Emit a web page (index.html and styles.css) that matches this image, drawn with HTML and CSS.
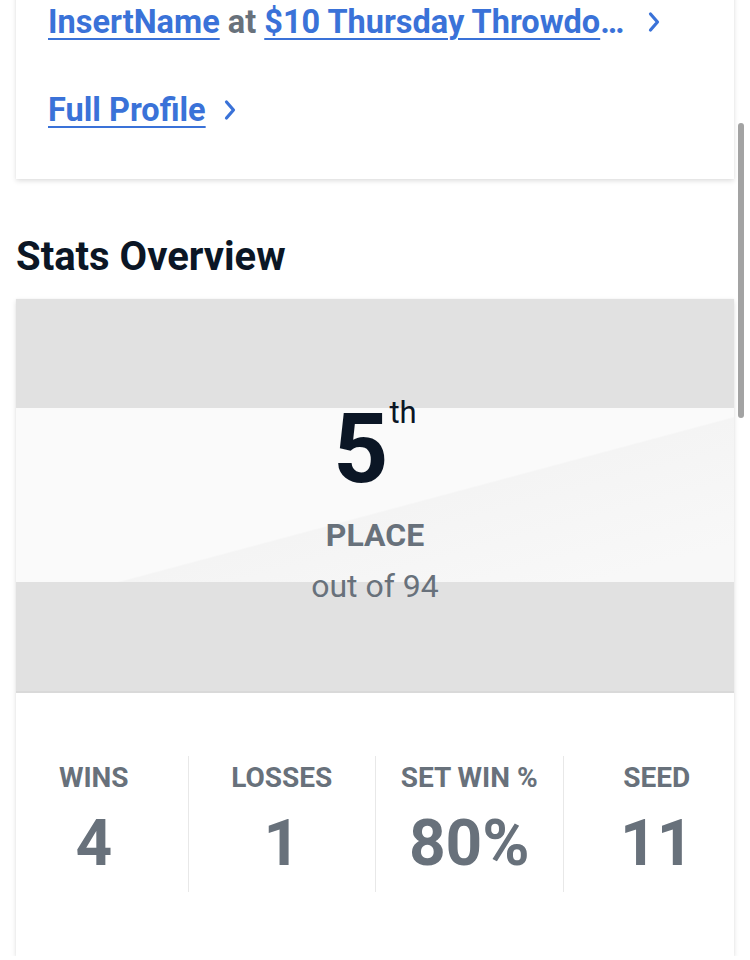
FILE: index.html
```html
<!DOCTYPE html>
<html lang="en">
<head>
<meta charset="utf-8">
<title>Player Overview</title>
<link rel="stylesheet" href="styles.css">
</head>
<body>
<main class="page">
  <section class="card links-card">
    <div class="link-row">
      <span class="link-text"><a class="link" href="#">InsertName</a> <span class="muted">at</span> <a class="link" href="#">$10 Thursday Throwdown</a></span>
      <svg class="chevron" viewBox="0 0 12 22" aria-hidden="true"><path d="M2.5 3 L9.5 11 L2.5 19"/></svg>
    </div>
    <div class="link-row">
      <span class="link-text"><a class="link" href="#">Full Profile</a></span>
      <svg class="chevron" viewBox="0 0 12 22" aria-hidden="true"><path d="M2.5 3 L9.5 11 L2.5 19"/></svg>
    </div>
  </section>

  <h2 class="section-title">Stats Overview</h2>

  <section class="card stats-card">
    <div class="placement">
      <div class="place-rank">5<span class="ordinal">th</span></div>
      <div class="place-label">PLACE</div>
      <div class="place-total">out of 94</div>
    </div>
    <div class="stat-grid">
      <div class="stat">
        <div class="stat-label">WINS</div>
        <div class="stat-value">4</div>
      </div>
      <div class="stat">
        <div class="stat-label">LOSSES</div>
        <div class="stat-value">1</div>
      </div>
      <div class="stat">
        <div class="stat-label">SET WIN %</div>
        <div class="stat-value">80%</div>
      </div>
      <div class="stat">
        <div class="stat-label">SEED</div>
        <div class="stat-value">11</div>
      </div>
    </div>
  </section>
</main>
<div class="scroll-thumb"></div>
</body>
</html>
```

FILE: styles.css
```css
* {
  box-sizing: border-box;
}

html, body {
  margin: 0;
  padding: 0;
  background: #ffffff;
  overflow: hidden;
}

body {
  font-family: Roboto, "Noto Sans", "Liberation Sans", sans-serif;
  color: #0b1625;
}

.page {
  padding: 0 16px;
}

.card {
  background: #ffffff;
  box-shadow: 0 2px 5px rgba(0, 0, 0, 0.13), 0 0 1px rgba(0, 0, 0, 0.06);
}

/* Event / profile links */
.links-card {
  margin-top: -40px;
  padding: 44px 32px 51px;
  display: flex;
  flex-direction: column;
  gap: 52px;
}

.link-row {
  display: flex;
  align-items: center;
  gap: 18px;
  font-size: 32.5px;
  font-weight: 700;
  line-height: 36px;
}

.link-text {
  color: #3a72d8;
  white-space: nowrap;
  overflow: hidden;
  text-overflow: ellipsis;
  max-width: 582px;
}

.link {
  color: #3a72d8;
  text-decoration: underline;
  text-decoration-thickness: 2px;
  text-underline-offset: 5px;
}

.muted {
  color: #68717b;
}

.chevron {
  flex: none;
  width: 12px;
  height: 22px;
  fill: none;
  stroke: #3a72d8;
  stroke-width: 3.2;
  stroke-linecap: round;
  stroke-linejoin: round;
}

/* Section heading */
.section-title {
  margin: 55px 0 19px;
  font-size: 40px;
  line-height: 46px;
  font-weight: 700;
  color: #0b1625;
}

/* Stats card */
.stats-card {
  padding-bottom: 64px;
}

.placement {
  height: 394px;
  padding-top: 102px;
  text-align: center;
  border-bottom: 2px solid #d9d9d9;
  background:
    linear-gradient(to bottom, #e1e1e1 0 109px, transparent 109px 283px, #e1e1e1 283px),
    linear-gradient(165deg, #fafafa 53%, #f4f4f4 53.3%, #f8f8f8 75%);
}

.place-rank {
  font-size: 96px;
  line-height: 96px;
  font-weight: 700;
  color: #0b1625;
}

.ordinal {
  font-size: 31px;
  font-weight: 400;
  line-height: 0;
  vertical-align: 59px;
  margin-left: 1px;
}

.place-label {
  margin-top: 20px;
  font-size: 32px;
  line-height: 36px;
  font-weight: 700;
  color: #68717b;
}

.place-total {
  margin-top: 15px;
  font-size: 32px;
  line-height: 36px;
  font-weight: 400;
  color: #68717b;
}

.stat-grid {
  margin: 63px -16px 0;
  display: grid;
  grid-template-columns: repeat(4, 1fr);
}

.stat {
  padding: 4px 0 12px;
  text-align: center;
  color: #68717b;
}

.stat + .stat {
  border-left: 1px solid #e8e8e8;
}

.stat-label {
  font-size: 28px;
  line-height: 36px;
  font-weight: 700;
}

.stat-value {
  margin-top: 12px;
  font-size: 64px;
  line-height: 72px;
  font-weight: 700;
}

/* Overlay scroll indicator */
.scroll-thumb {
  position: fixed;
  top: 123px;
  left: 738px;
  width: 6px;
  height: 295px;
  border-radius: 3px;
  background: #a3a3a3;
}
```
